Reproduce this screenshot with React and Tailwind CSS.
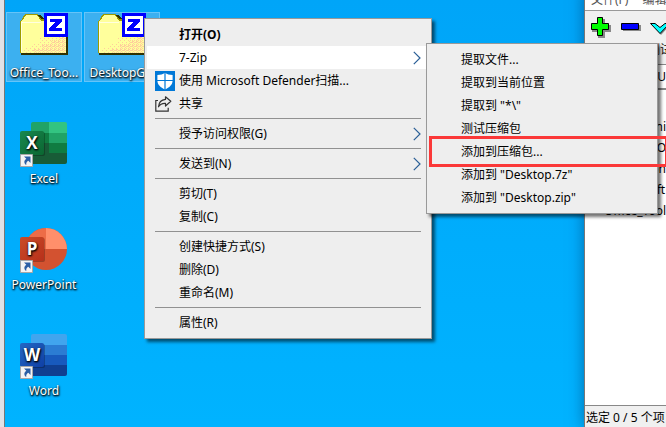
import clsx from 'clsx';

const mainMenu = [
  { label: '打开(O)', bold: true },
  { label: '7-Zip', arrow: true, active: true },
  { label: '使用 Microsoft Defender扫描...', icon: 'shield' },
  { label: '共享', icon: 'share' },
  null,
  { label: '授予访问权限(G)', arrow: true },
  null,
  { label: '发送到(N)', arrow: true },
  null,
  { label: '剪切(T)' },
  { label: '复制(C)' },
  null,
  { label: '创建快捷方式(S)' },
  { label: '删除(D)' },
  { label: '重命名(M)' },
  null,
  { label: '属性(R)' },
];

const zipMenu = [
  { label: '提取文件...' },
  { label: '提取到当前位置' },
  { label: '提取到 "*\\"' },
  { label: '测试压缩包' },
  { label: '添加到压缩包...', marked: true },
  { label: '添加到 "Desktop.7z"' },
  { label: '添加到 "Desktop.zip"' },
];

const files = ['desktop.ini', 'DesktopGO', 'Animation', 'Microsoft', 'Office_Tool'];

function ShieldIcon() {
  return (
    <svg width="20" height="20" viewBox="0 0 20 20">
      <rect width="20" height="20" fill="#0078d7" />
      <path d="M10 1.8c2 1.5 4.6 2.2 7.6 2.2v5.4c0 4.2-3.2 7-7.6 9-4.400-2-7.600-4.800-7.600-9V4c3 0 5.600-.7 7.600-2.200z" fill="#fff" />
      <path d="M10 1v18M2 9.500h16" stroke="#0078d7" strokeWidth="1.200" />
    </svg>
  );
}

function ShareIcon() {
  return (
    <svg width="20" height="20" viewBox="0 0 20 20" fill="none" stroke="#333" strokeWidth="1.200">
      <path d="M3 6.500H.8v10.700h12.400v-3.400" />
      <path d="M10.500 2.800l5.300 4.500-5.300 4.700V9.400C7.500 9.200 5 10.300 3.500 12.800c.3-4 2.700-7 7-7.400z" strokeLinejoin="round" />
    </svg>
  );
}

function Arrow() {
  return (
    <svg width="8" height="14" viewBox="0 0 8 14" fill="none">
      <path d="M.8.8L7 7 .8 13.200" stroke="#2a5f96" strokeWidth="1.200" />
    </svg>
  );
}

function MenuItem({ item }) {
  return (
    <button
      role="menuitem"
      className={clsx(
        'relative flex h-[23px] w-full items-center pr-2 text-left whitespace-nowrap',
        item.active && 'bg-white',
        item.bold && 'font-bold'
      )}
    >
      <span className="flex w-8 shrink-0 pl-2">
        {item.icon === 'shield' && <ShieldIcon />}
        {item.icon === 'share' && <ShareIcon />}
      </span>
      <span className="flex-1">{item.label}</span>
      {item.arrow && <Arrow />}
      {item.marked && (
        <span className="absolute -top-1 left-0 h-[31px] w-[239px] border-3 border-[#fb3838]" />
      )}
    </button>
  );
}

function Menu({ items, className }) {
  return (
    <div
      role="menu"
      className={clsx(
        'absolute border border-[#999] bg-[#eee] px-0.5 py-1 shadow-[3px_3px_3px_rgba(0,0,0,0.55)]',
        className
      )}
    >
      {items.map((item, i) =>
        item ? (
          <MenuItem key={i} item={item} />
        ) : (
          <div key={i} className="flex h-[7px] items-center px-2">
            <hr className="w-full border-[#919191]" />
          </div>
        )
      )}
    </div>
  );
}

function FolderIcon({ id }) {
  return (
    <svg width="48" height="48" viewBox="0 0 48 48" shapeRendering="crispEdges" className="overflow-visible">
      <defs>
        <pattern id={`${id}-light`} width="4" height="4" patternUnits="userSpaceOnUse">
          <path d="M0 0h1v1H0zM2 2h1v1H2z" fill="#ffce9c" />
        </pattern>
        <pattern id={`${id}-dense`} width="4" height="4" patternUnits="userSpaceOnUse">
          <path d="M1 0h2v1H1zM3 1h1v1H3zM0 2h1v1H0zM2 3h2v1H2z" fill="#ffce9c" />
        </pattern>
      </defs>
      <path d="M0 7l2-2 2-4 2-1h12l3 4h26v35H0z" fill="#9c9c00" />
      <path d="M1 8l3-4 2-3h11l4 6h25v32H1z" fill="#ffff9c" />
      <path d="M46 16v23H3v-5h8v-5h8v-5h8v-5h7v-3z" fill={`url(#${id}-light)`} />
      <path d="M46 22v17H13v-4h9v-5h9v-4h8v-4z" fill={`url(#${id}-dense)`} />
      <path d="M46 7h2v34H1v-2h45zM18 1h3l3 4h-3z" fill="#313100" />
      <path d="M1 8.500h20M1.500 8v30" stroke="#ffffe0" />
      <rect x="24" y="-1" width="24" height="24" fill="#0000ff" />
      <rect x="27" y="2" width="18" height="18" fill="#fff" />
      <path d="M30 5h12v3l-7 6h7v3H29v-3l7-6h-6z" fill="#0000ff" />
    </svg>
  );
}

function Shortcut() {
  return (
    <g>
      <path d="M.5 34.500h12v12H.5z" fill="#f4f4f4" stroke="#a7a7a7" />
      <path d="M4 36.500h6.500V43l-2.200-2.200c-1.700 1-2.300 2.300-2 4.200-2.500-1.500-2.600-4.700 0-6.300z" fill="#2b5fa5" />
    </g>
  );
}

function OfficeTile({ letter, from, to }) {
  const id = `tile-${letter}`;
  return (
    <g>
      <defs>
        <linearGradient id={id} x1="0" y1="0" x2="1" y2="1">
          <stop offset="0" stopColor={from} />
          <stop offset="1" stopColor={to} />
        </linearGradient>
      </defs>
      <rect x="1" y="12" width="24" height="24" rx="2" fill="#000" opacity=".25" />
      <rect y="11" width="24" height="24" rx="2" fill={`url(#${id})`} />
      <text x="12" y="29" textAnchor="middle" fill="#fff" fontFamily="Open Sans" fontWeight="700" fontSize="17">
        {letter}
      </text>
    </g>
  );
}

function ExcelIcon() {
  return (
    <svg width="48" height="48" viewBox="0 0 48 48">
      <clipPath id="xl"><rect x="11" y="2" width="36" height="42" rx="2" /></clipPath>
      <g clipPath="url(#xl)">
        <path d="M11 2h18v11H11z" fill="#21a366" />
        <path d="M29 2h18v11H29z" fill="#33c481" />
        <path d="M11 13h18v10H11z" fill="#107c41" />
        <path d="M29 13h18v10H29z" fill="#21a366" />
        <path d="M11 23h18v10H11z" fill="#185c37" />
        <path d="M29 23h18v10H29z" fill="#107c41" />
        <path d="M11 33h36v11H11z" fill="#185c37" />
      </g>
      <OfficeTile letter="X" from="#18884f" to="#0b6631" />
      <Shortcut />
    </svg>
  );
}

function PowerPointIcon() {
  return (
    <svg width="48" height="48" viewBox="0 0 48 48">
      <circle cx="26" cy="23" r="21" fill="#d35230" />
      <path d="M26 2a21 21 0 0 0-21 21h21z" fill="#ed6c47" />
      <path d="M26 2a21 21 0 0 1 21 21H26z" fill="#ff8f6b" />
      <OfficeTile letter="P" from="#ca4c28" to="#b7301a" />
      <Shortcut />
    </svg>
  );
}

function WordIcon() {
  return (
    <svg width="48" height="48" viewBox="0 0 48 48">
      <clipPath id="wd"><rect x="11" y="2" width="36" height="42" rx="2" /></clipPath>
      <g clipPath="url(#wd)">
        <path d="M11 2h36v11H11z" fill="#41a5ee" />
        <path d="M11 13h36v10H11z" fill="#2b7cd3" />
        <path d="M11 23h36v10H11z" fill="#185abd" />
        <path d="M11 33h36v11H11z" fill="#103f91" />
      </g>
      <OfficeTile letter="W" from="#2368c4" to="#0f3fa5" />
      <Shortcut />
    </svg>
  );
}

function DesktopIcon({ label, selected, children }) {
  return (
    <a
      href="#"
      className={clsx(
        'flex h-[70px] w-[76px] flex-col items-center gap-[3px] border pt-px leading-4 whitespace-nowrap text-white [text-shadow:1px_1px_2px_#000,0_1px_2px_#000]',
        selected ? 'border-[#66c4f8] bg-[#3cb0f0]' : 'border-transparent'
      )}
    >
      <span className="shrink-0">{children}</span>
      {label}
    </a>
  );
}

function ToolButton({ label, children }) {
  return (
    <button className="flex w-[30px] shrink-0 flex-col items-center gap-0.5">
      <svg width="22" height="22" viewBox="0 0 22 22">{children}</svg>
      <span className="leading-5 whitespace-nowrap">{label}</span>
    </button>
  );
}

function ZipWindow() {
  return (
    <section className="absolute -top-2.5 right-0 bottom-0 left-[584px] flex flex-col overflow-hidden border-l border-[#777] bg-white shadow-[0_0_14px_rgba(0,40,90,0.5)]">
      <nav className="flex h-5 shrink-0 items-center gap-3.5 pl-1.5 whitespace-nowrap text-[#555]">
        <button>文件(F)</button>
        <button>编辑(E)</button>
      </nav>
      <div className="flex h-[54px] shrink-0 items-start border-t border-[#999] bg-[#f0f0f0] pt-[5px]">
        <ToolButton label="添加">
          <path d="M9 3h7v6h6v7h-6v6H9v-6H3V9h6z" fill="#888" />
          <path d="M8.500 1.500h5v6h6v6h-6v6h-5v-6h-6v-6h6z" fill="#00ff00" stroke="#000" />
        </ToolButton>
        <ToolButton label="提取">
          <path d="M4 9h18v6H4z" fill="#888" />
          <path d="M2.500 7.500h17v6h-17z" fill="#0000ff" stroke="#000" />
        </ToolButton>
        <ToolButton label="测试">
          <path d="M3 8l3 0 6 5 6-5h4l-10 11z" fill="#888" />
          <path d="M1.500 7.500h4.500l5 4 5-4h4.500l-9.500 10z" fill="#00ffff" stroke="#000" />
        </ToolButton>
      </div>
      <input
        aria-label="路径"
        defaultValue="C:\Users\"
        className="h-[26px] w-full shrink-0 border-t border-b-2 border-[#888] bg-white pl-[57px]"
      />
      <ul className="flex-1 overflow-hidden pt-[26px]">
        {files.map((name) => (
          <li key={name} className="flex h-[21px] items-center gap-1.5 pl-2 whitespace-nowrap">
            <svg width="13" height="13" viewBox="0 0 13 13">
              <path d="M0 1h5l1 1h7v11H0z" fill="#f7d560" />
              <path d="M5 6h6v6H5z" fill="#a89858" />
              <path d="M6 8h3v3H6z" fill="#6d7fa8" />
            </svg>
            {name}
          </li>
        ))}
      </ul>
      <footer className="h-[22px] shrink-0 border-t border-[#888] bg-[#f0f0f0] pl-px leading-6 whitespace-nowrap">
        选定 0 / 5 个项目
      </footer>
    </section>
  );
}

export default function App() {
  return (
    <div className="relative flex h-screen overflow-hidden bg-linear-to-b from-[#00a5f8] to-[#00b3ff] font-['Noto_Sans','Noto_Sans_CJK_SC',sans-serif] text-xs text-black">
      <div className="w-[5px] shrink-0 border-r border-[#777] bg-[#e1e1e6]" />
      <main className="flex gap-0.5 pt-3 pl-px">
        <div className="flex flex-col gap-9">
          <DesktopIcon label="Office_Too..." selected><FolderIcon id="dots-a" /></DesktopIcon>
          <DesktopIcon label="Excel"><ExcelIcon /></DesktopIcon>
          <DesktopIcon label="PowerPoint"><PowerPointIcon /></DesktopIcon>
          <DesktopIcon label="Word"><WordIcon /></DesktopIcon>
        </div>
        <DesktopIcon label="DesktopGO" selected><FolderIcon id="dots-b" /></DesktopIcon>
      </main>
      <ZipWindow />
      <Menu items={mainMenu} className="top-[18px] left-36 w-72" />
      <Menu items={zipMenu} className="top-[43px] left-[426px] w-[232px]" />
    </div>
  );
}
